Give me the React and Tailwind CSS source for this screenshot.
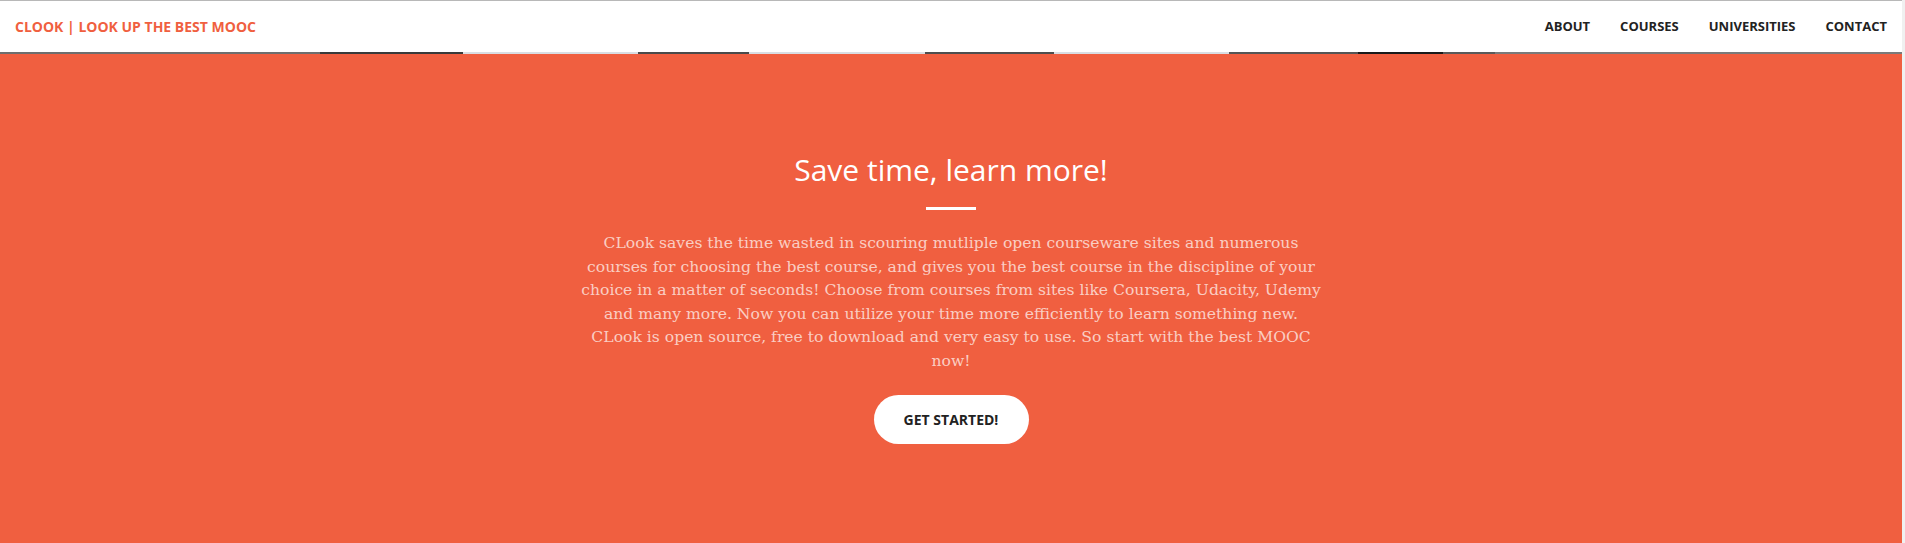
const links = ['About', 'Courses', 'Universities', 'Contact'];

// thin band of the header photo peeking out under the navbar
const strip = [
  ['w-[320px]', 'bg-[#6e6e6e]'],
  ['w-[143px]', 'bg-[#3a3a3a]'],
  ['w-[175px]', 'bg-[#d9dde2]'],
  ['w-[111px]', 'bg-[#4a4a4a]'],
  ['w-[176px]', 'bg-[#d9dde2]'],
  ['w-[129px]', 'bg-[#4e4e4e]'],
  ['w-[175px]', 'bg-[#d9dde2]'],
  ['w-[129px]', 'bg-[#555555]'],
  ['w-[85px]', 'bg-[#1a1a1a]'],
  ['w-[52px]', 'bg-[#5a5a5a]'],
  ['flex-1', 'bg-[#7a7a7a]'],
];

function Navbar() {
  return (
    <nav className="h-[52px] bg-white border-t border-[#b8b8b8] flex items-center justify-between font-['Open_Sans',sans-serif] font-bold uppercase">
      <a className="pl-[15px] text-[14px] text-[#f05f40]">CLook | Look up the best MOOC</a>
      <ul className="flex">
        {links.map((l) => (
          <li key={l} className="px-[15px] text-[13px] text-[#222222]">
            {l}
          </li>
        ))}
      </ul>
    </nav>
  );
}

export default function App() {
  return (
    <div className="flex min-h-[543px] bg-[#f0f0f0]">
      <div className="w-[1902px] flex flex-col">
        <Navbar />
        <div className="flex h-[2px]">
          {strip.map(([w, c], i) => (
            <div key={i} className={`${w} ${c}`} />
          ))}
        </div>

        <section className="flex-1 bg-[#f05f40] flex flex-col items-center pt-[101px]">
          <h2 className="font-['Open_Sans',sans-serif] text-[30px] leading-none text-white">
            Save time, learn more!
          </h2>
          <hr className="mt-[22px] w-[50px] border-0 border-t-[3px] border-white" />
          <p className="mt-[22px] w-[780px] text-center font-['DejaVu_Serif',serif] text-[15.6px] leading-[23.6px] text-white/70">
            CLook saves the time wasted in scouring mutliple open courseware sites and numerous
            <br />
            courses for choosing the best course, and gives you the best course in the discipline of your
            <br />
            choice in a matter of seconds! Choose from courses from sites like Coursera, Udacity, Udemy
            <br />
            and many more. Now you can utilize your time more efficiently to learn something new.
            <br />
            CLook is open source, free to download and very easy to use. So start with the best MOOC
            <br />
            now!
          </p>
          <button className="mt-[21px] w-[155px] h-[49px] rounded-full bg-white font-['Open_Sans',sans-serif] font-bold text-[14px] uppercase text-[#222222]">
            Get Started!
          </button>
        </section>
      </div>
    </div>
  );
}
